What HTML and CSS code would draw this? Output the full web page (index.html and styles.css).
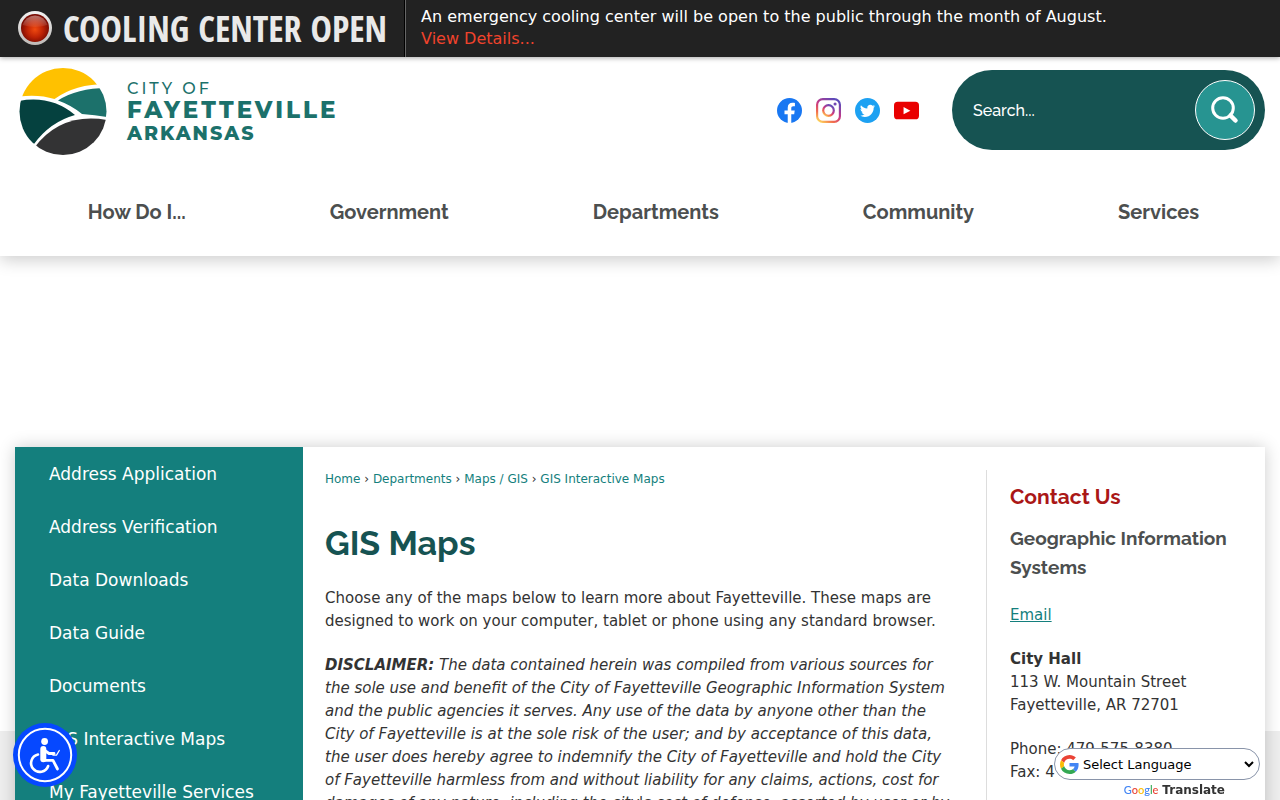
FILE: index.html
```html
<!DOCTYPE html>
<html lang="en">
<head>
<meta charset="utf-8">
<meta name="viewport" content="width=device-width, initial-scale=1">
<title>GIS Maps | Fayetteville, AR</title>
<link rel="stylesheet" href="styles.css">
</head>
<body>
<section class="alert" aria-label="Alert">
  <div class="alert-title">
    <svg class="alert-icon" viewBox="0 0 36 36" aria-hidden="true">
      <defs>
        <radialGradient id="lamp" cx="50%" cy="55%" r="52%"><stop offset="0" stop-color="#f04a10"/><stop offset=".55" stop-color="#bd2205"/><stop offset="1" stop-color="#760a02"/></radialGradient>
        <linearGradient id="rim" x1="0" y1="0" x2="0" y2="1"><stop offset="0" stop-color="#f2f2f2"/><stop offset="1" stop-color="#bdb9b6"/></linearGradient>
        <linearGradient id="shine" x1="0" y1="0" x2="0" y2="1"><stop offset="0" stop-color="#fff" stop-opacity=".42"/><stop offset="1" stop-color="#fff" stop-opacity=".06"/></linearGradient>
      </defs>
      <circle cx="18" cy="17" r="17" fill="url(#rim)"/>
      <circle cx="18" cy="17" r="14" fill="url(#lamp)"/>
      <path d="M5.500 14a13 13 0 0 1 25 0Q18 18 5.500 14Z" fill="url(#shine)"/>
    </svg>
    <strong>COOLING CENTER OPEN</strong>
  </div>
  <div class="alert-text">
    <span>An emergency cooling center will be open to the public through the month of August.</span>
    <a href="#details">View Details...</a>
  </div>
</section>

<header class="header">
  <div class="brand-row">
    <a class="logo" href="#home">
      <svg class="logo-mark" viewBox="0 0 88 88" aria-hidden="true">
        <defs><clipPath id="disc"><circle cx="44" cy="43.500" r="43.500"/></clipPath></defs>
        <g clip-path="url(#disc)">
          <path d="M0 0H88V16Q56 16 35.500 31Q20 26 0 28.500Z" fill="#ffc100"/>
          <path d="M39 32.500Q58 20 88 20V49Q76 47 63 46Q52 37 39 32.500Z" fill="#1c716b"/>
          <path d="M0 33Q32 27 56 47Q31 54 15 76L0 80Z" fill="#05413f"/>
          <path d="M15 80Q42 44 88 52V88H12Z" fill="#333334"/>
        </g>
      </svg>
      <span class="logo-text">
        <span class="logo-city">CITY OF</span>
        <span class="logo-name">FAYETTEVILLE</span>
        <span class="logo-state">ARKANSAS</span>
      </span>
    </a>
    <div class="tools">
      <div class="social">
        <a href="#facebook" aria-label="Facebook"><svg viewBox="0 0 24 24"><circle cx="12" cy="12" r="12" fill="#1877f2"/><path d="M10.300 24v-8.500H7.200V12h3.100V9.400c0-3.100 1.800-4.800 4.600-4.800 1.300 0 2.300.2 2.300.2v3h-1.500c-1.500 0-2 .9-2 1.900V12H17l-.5 3.500h-2.800V24z" fill="#fff"/></svg></a>
        <a href="#instagram" aria-label="Instagram"><svg viewBox="0 0 24 24"><defs><linearGradient id="insta" x1="0.100" y1="1" x2=".75" y2="0"><stop offset="0" stop-color="#fed55c"/><stop offset=".28" stop-color="#f16b4e"/><stop offset=".55" stop-color="#c83885"/><stop offset="1" stop-color="#5c4aba"/></linearGradient></defs><g fill="none" stroke="url(#insta)" stroke-width="2.100"><rect x="1.050" y="1.050" width="21.900" height="21.900" rx="5.500"/><circle cx="12" cy="12" r="5.100"/></g><circle cx="18.300" cy="5.700" r="1.500" fill="#7146b4"/></svg></a>
        <a href="#twitter" aria-label="Twitter"><svg viewBox="0 0 24 24"><circle cx="12" cy="12" r="12" fill="#1da1f2"/><path d="M19.200 7.900c-.5.200-1.100.4-1.700.5.600-.4 1.100-1 1.300-1.700-.6.400-1.200.6-1.900.7a3 3 0 0 0-5.100 2.700c-2.500-.1-4.700-1.300-6.100-3.100-.8 1.400-.4 3.100.9 4-.5 0-.9-.2-1.300-.4 0 1.400 1 2.700 2.400 3-.4.100-.9.100-1.300 0 .4 1.200 1.500 2 2.800 2.100a6 6 0 0 1-4.400 1.200c1.300.9 2.900 1.400 4.600 1.400 5.500 0 8.700-4.700 8.500-8.900.6-.4 1.100-.9 1.300-1.500z" fill="#fff"/></svg></a>
        <a href="#youtube" aria-label="YouTube"><svg viewBox="0 0 24 24"><rect y="3.500" width="24" height="17" rx="3.500" fill="#e90000"/><path d="m9.200 8.700 6.500 3.500-6.500 3.500z" fill="#fff"/></svg></a>
      </div>
      <form class="search">
        <input type="text" placeholder="Search..." aria-label="Search">
        <button type="button" aria-label="Search"><svg viewBox="0 0 30 30"><circle cx="13" cy="13" r="10.300" fill="none" stroke="#fff" stroke-width="3"/><path d="m20.500 20.500 5 5" stroke="#fff" stroke-width="4.500" stroke-linecap="round"/></svg></button>
      </form>
    </div>
  </div>
  <nav class="main-nav" aria-label="Main">
    <a href="#how">How Do I...</a>
    <a href="#government">Government</a>
    <a href="#departments">Departments</a>
    <a href="#community">Community</a>
    <a href="#services">Services</a>
  </nav>
</header>

<div class="page">
  <div class="card">
    <nav class="side-nav" aria-label="Section">
      <a href="#a">Address Application</a>
      <a href="#b">Address Verification</a>
      <a href="#c">Data Downloads</a>
      <a href="#d">Data Guide</a>
      <a href="#e">Documents</a>
      <a href="#f">GIS Interactive Maps</a>
      <a href="#g">My Fayetteville Services</a>
    </nav>
    <main class="content">
      <nav class="crumbs" aria-label="Breadcrumb"><a href="#home">Home</a> › <a href="#departments">Departments</a> › <a href="#maps">Maps / GIS</a> › <a href="#gis">GIS Interactive Maps</a></nav>
      <h1>GIS Maps</h1>
      <p>Choose any of the maps below to learn more about Fayetteville. These maps are designed to work on your computer, tablet or phone using any standard browser.</p>
      <p class="disclaimer"><strong>DISCLAIMER:</strong> The data contained herein was compiled from various sources for<br>the sole use and benefit of the City of Fayetteville Geographic Information System<br>and the public agencies it serves. Any use of the data by anyone other than the<br>City of Fayetteville is at the sole risk of the user; and by acceptance of this data,<br>the user does hereby agree to indemnify the City of Fayetteville and hold the City<br>of Fayetteville harmless from and without liability for any claims, actions, cost for<br>damages of any nature, including the city's cost of defense, asserted by user or by</p>
    </main>
    <aside class="contact">
      <h2>Contact Us</h2>
      <h3>Geographic Information Systems</h3>
      <p><a href="#email">Email</a></p>
      <p><strong>City Hall</strong><br>113 W. Mountain Street<br>Fayetteville, AR 72701</p>
      <p>Phone: 479-575-8380<br>Fax: 4</p>
    </aside>
  </div>
</div>

<button class="access" type="button" aria-label="Accessibility menu">
  <svg viewBox="0 0 64 64"><circle cx="32" cy="32" r="32" fill="#0648ff"/><circle cx="32" cy="32" r="26.200" fill="none" stroke="#fff" stroke-width="2"/><circle cx="31.600" cy="18.500" r="3.400" fill="#fff"/><g fill="none" stroke="#fff" stroke-linecap="round" stroke-linejoin="round"><path d="M30.300 26V36.300" stroke-width="6"/><path d="M31 27l5 3.500h5M30.500 37.300h9.500L44.500 46" stroke-width="2.800"/><path d="M40 32.200h3.500l2.800-4.700" stroke-width="1.300"/><path d="M25 31.500a8.800 8.800 0 1 0 10.200 11.500" stroke-width="2.600"/></g></svg>
</button>

<div class="translate">
  <div class="language">
    <svg viewBox="0 0 48 48" aria-hidden="true"><path fill="#EA4335" d="M24 9.500c3.540 0 6.710 1.220 9.210 3.600l6.850-6.850C35.900 2.380 30.470 0 24 0 14.620 0 6.510 5.380 2.560 13.220l7.980 6.190C12.430 13.720 17.740 9.500 24 9.500z"/><path fill="#4285F4" d="M46.980 24.550c0-1.570-.15-3.090-.38-4.550H24v9.020h12.940c-.58 2.960-2.260 5.480-4.780 7.180l7.730 6c4.510-4.180 7.090-10.360 7.090-17.650z"/><path fill="#FBBC05" d="M10.530 28.590c-.48-1.450-.76-2.990-.76-4.590s.27-3.140.76-4.590l-7.980-6.190C.92 16.460 0 20.120 0 24c0 3.880.92 7.540 2.560 10.780l7.970-6.190z"/><path fill="#34A853" d="M24 48c6.480 0 11.930-2.130 15.890-5.810l-7.730-6c-2.150 1.450-4.920 2.300-8.160 2.300-6.260 0-11.570-4.220-13.470-9.910l-7.980 6.190C6.510 42.620 14.620 48 24 48z"/></svg>
    <select aria-label="Select Language"><option>Select Language</option></select>
  </div>
  <div class="powered"><span class="google"><i class="blue">G</i><i class="red">o</i><i class="yellow">o</i><i class="blue">g</i><i class="green">l</i><i class="red">e</i></span><strong>Translate</strong></div>
</div>
</body>
</html>
```

FILE: styles.css
```css
* { box-sizing: border-box; }
html, body { height: 100%; }
body {
  margin: 0;
  overflow: hidden;
  display: flex;
  flex-direction: column;
  background: linear-gradient(#fff 731px, #eee 731px);
  color: #333;
  font: 15px/23px "DejaVu Sans", sans-serif;
}
a { color: #147f7d; }

.alert {
  position: relative;
  z-index: 2;
  flex: none;
  display: flex;
  min-height: 57px;
  background: #222;
  color: #fff;
  box-shadow: 0 1px 5px rgba(0, 0, 0, .35);
}
.alert-title {
  display: flex;
  align-items: center;
  gap: 10px;
  padding: 0 17px 0 17px;
  border-right: 1px solid #000;
  color: #e9e9e9;
  font: 36px/56px "Open Sans Condensed", "Liberation Sans Narrow", "DejaVu Sans Condensed", sans-serif;
}
.alert-icon { width: 36px; height: 36px; }
.alert-text {
  display: flex;
  flex-direction: column;
  padding: 6px 15px;
  border-left: 1px solid #666;
  font-size: 16px;
  line-height: 22px;
}
.alert-text a { color: #f0432c; text-decoration: none; }

.header {
  position: relative;
  z-index: 1;
  flex: none;
  padding: 11px 15px 13px;
  background: #fff;
  box-shadow: 0 4px 16px rgba(0, 0, 0, .2);
}
.brand-row { display: flex; justify-content: space-between; align-items: flex-start; }
.logo { display: flex; gap: 20px; padding-left: 4px; text-decoration: none; }
.logo-mark { width: 88px; height: 88px; }
.logo-text {
  display: flex;
  flex-direction: column;
  padding-top: 11px;
  color: #1c716b;
  font-family: Montserrat, Lato, sans-serif;
}
.logo-city { font-size: 16px; line-height: 20px; font-weight: 500; letter-spacing: 3px; }
.logo-name { font-size: 23px; line-height: 23px; font-weight: 800; letter-spacing: 3px; }
.logo-state { font-size: 19px; line-height: 23px; font-weight: 800; letter-spacing: 2px; }

.tools { display: flex; align-items: center; gap: 33px; padding-top: 2px; }
.social { display: flex; gap: 14px; }
.social svg { display: block; width: 25px; height: 25px; }
.search {
  display: flex;
  align-items: center;
  width: 313px;
  height: 80px;
  padding: 0 10px 0 21px;
  border-radius: 40px;
  background: #165352;
}
.search input {
  flex: 1;
  min-width: 0;
  padding: 0;
  border: 0;
  outline: 0;
  background: none;
  color: #fff;
  font: 500 16px Raleway, Lato, sans-serif;
}
.search input::placeholder { color: #fff; opacity: 1; }
.search button {
  display: grid;
  place-items: center;
  width: 60px;
  height: 60px;
  padding: 0;
  border: 1px solid #fff;
  border-radius: 50%;
  background: #279491;
}
.search button svg { width: 30px; height: 30px; }

.main-nav {
  display: flex;
  justify-content: center;
  gap: 144px;
  padding: 25px 0 0 7px;
}
.main-nav a {
  padding: 24px 0;
  color: #4c4f4f;
  font: bold 20px/14px Raleway, Lato, sans-serif;
  text-decoration: none;
}

.page { flex: none; padding: 191px 15px 0; }
.card {
  display: grid;
  grid-template-columns: 288px minmax(0, 1fr) 279px;
  background: #fff;
  box-shadow: 0 0 16px rgba(0, 0, 0, .2);
}
.side-nav { display: flex; flex-direction: column; padding-top: 1px; background: #147f7d; }
.side-nav a {
  padding: 15px 34px;
  color: #fff;
  font-size: 17px;
  line-height: 23px;
  text-decoration: none;
}
.content { padding: 22px 22px 0; }
.crumbs { font-size: 12px; line-height: 20px; }
.crumbs a { text-decoration: none; }
h1, h2, h3 { margin: 0; font-family: Raleway, Lato, sans-serif; font-weight: 700; }
h1 { margin: 32px 0 22px; color: #165352; font-size: 34px; line-height: 44px; }
p { margin: 0 0 21px; }
.disclaimer { font-style: italic; }
.contact { margin-top: 23px; padding: 14px 22px 0 23px; border-left: 1px solid #ddd; }
h2 { margin-bottom: 14px; color: #aa1717; font-size: 21px; line-height: 26px; }
h3 { margin-bottom: 22px; color: #4c4f4f; font-size: 19px; line-height: 29px; }

.access {
  position: fixed;
  left: 13px;
  bottom: 13px;
  z-index: 3;
  width: 64px;
  height: 64px;
  padding: 0;
  border: 0;
  border-radius: 50%;
  background: none;
}
.access svg { display: block; }
.translate { position: fixed; right: 20px; bottom: 0; z-index: 3; width: 206px; }
.language {
  display: flex;
  align-items: center;
  height: 32px;
  padding: 0 2px 0 5px;
  border: 1px solid #8994a9;
  border-radius: 16px;
  background: #fff;
}
.language svg { flex: none; width: 19px; height: 19px; }
.language select { flex: 1; min-width: 0; border: 0; background: none; color: #000; font: 13px "DejaVu Sans", sans-serif; }
.powered { display: flex; justify-content: flex-end; gap: 4px; padding-right: 35px; font-size: 12px; line-height: 20px; }
.google { font: 500 11px/19px Lato, sans-serif; }
.google i { font-style: normal; }
.blue { color: #4285f4; }
.red { color: #ea4335; }
.yellow { color: #fbbc05; }
.green { color: #34a853; }
```
